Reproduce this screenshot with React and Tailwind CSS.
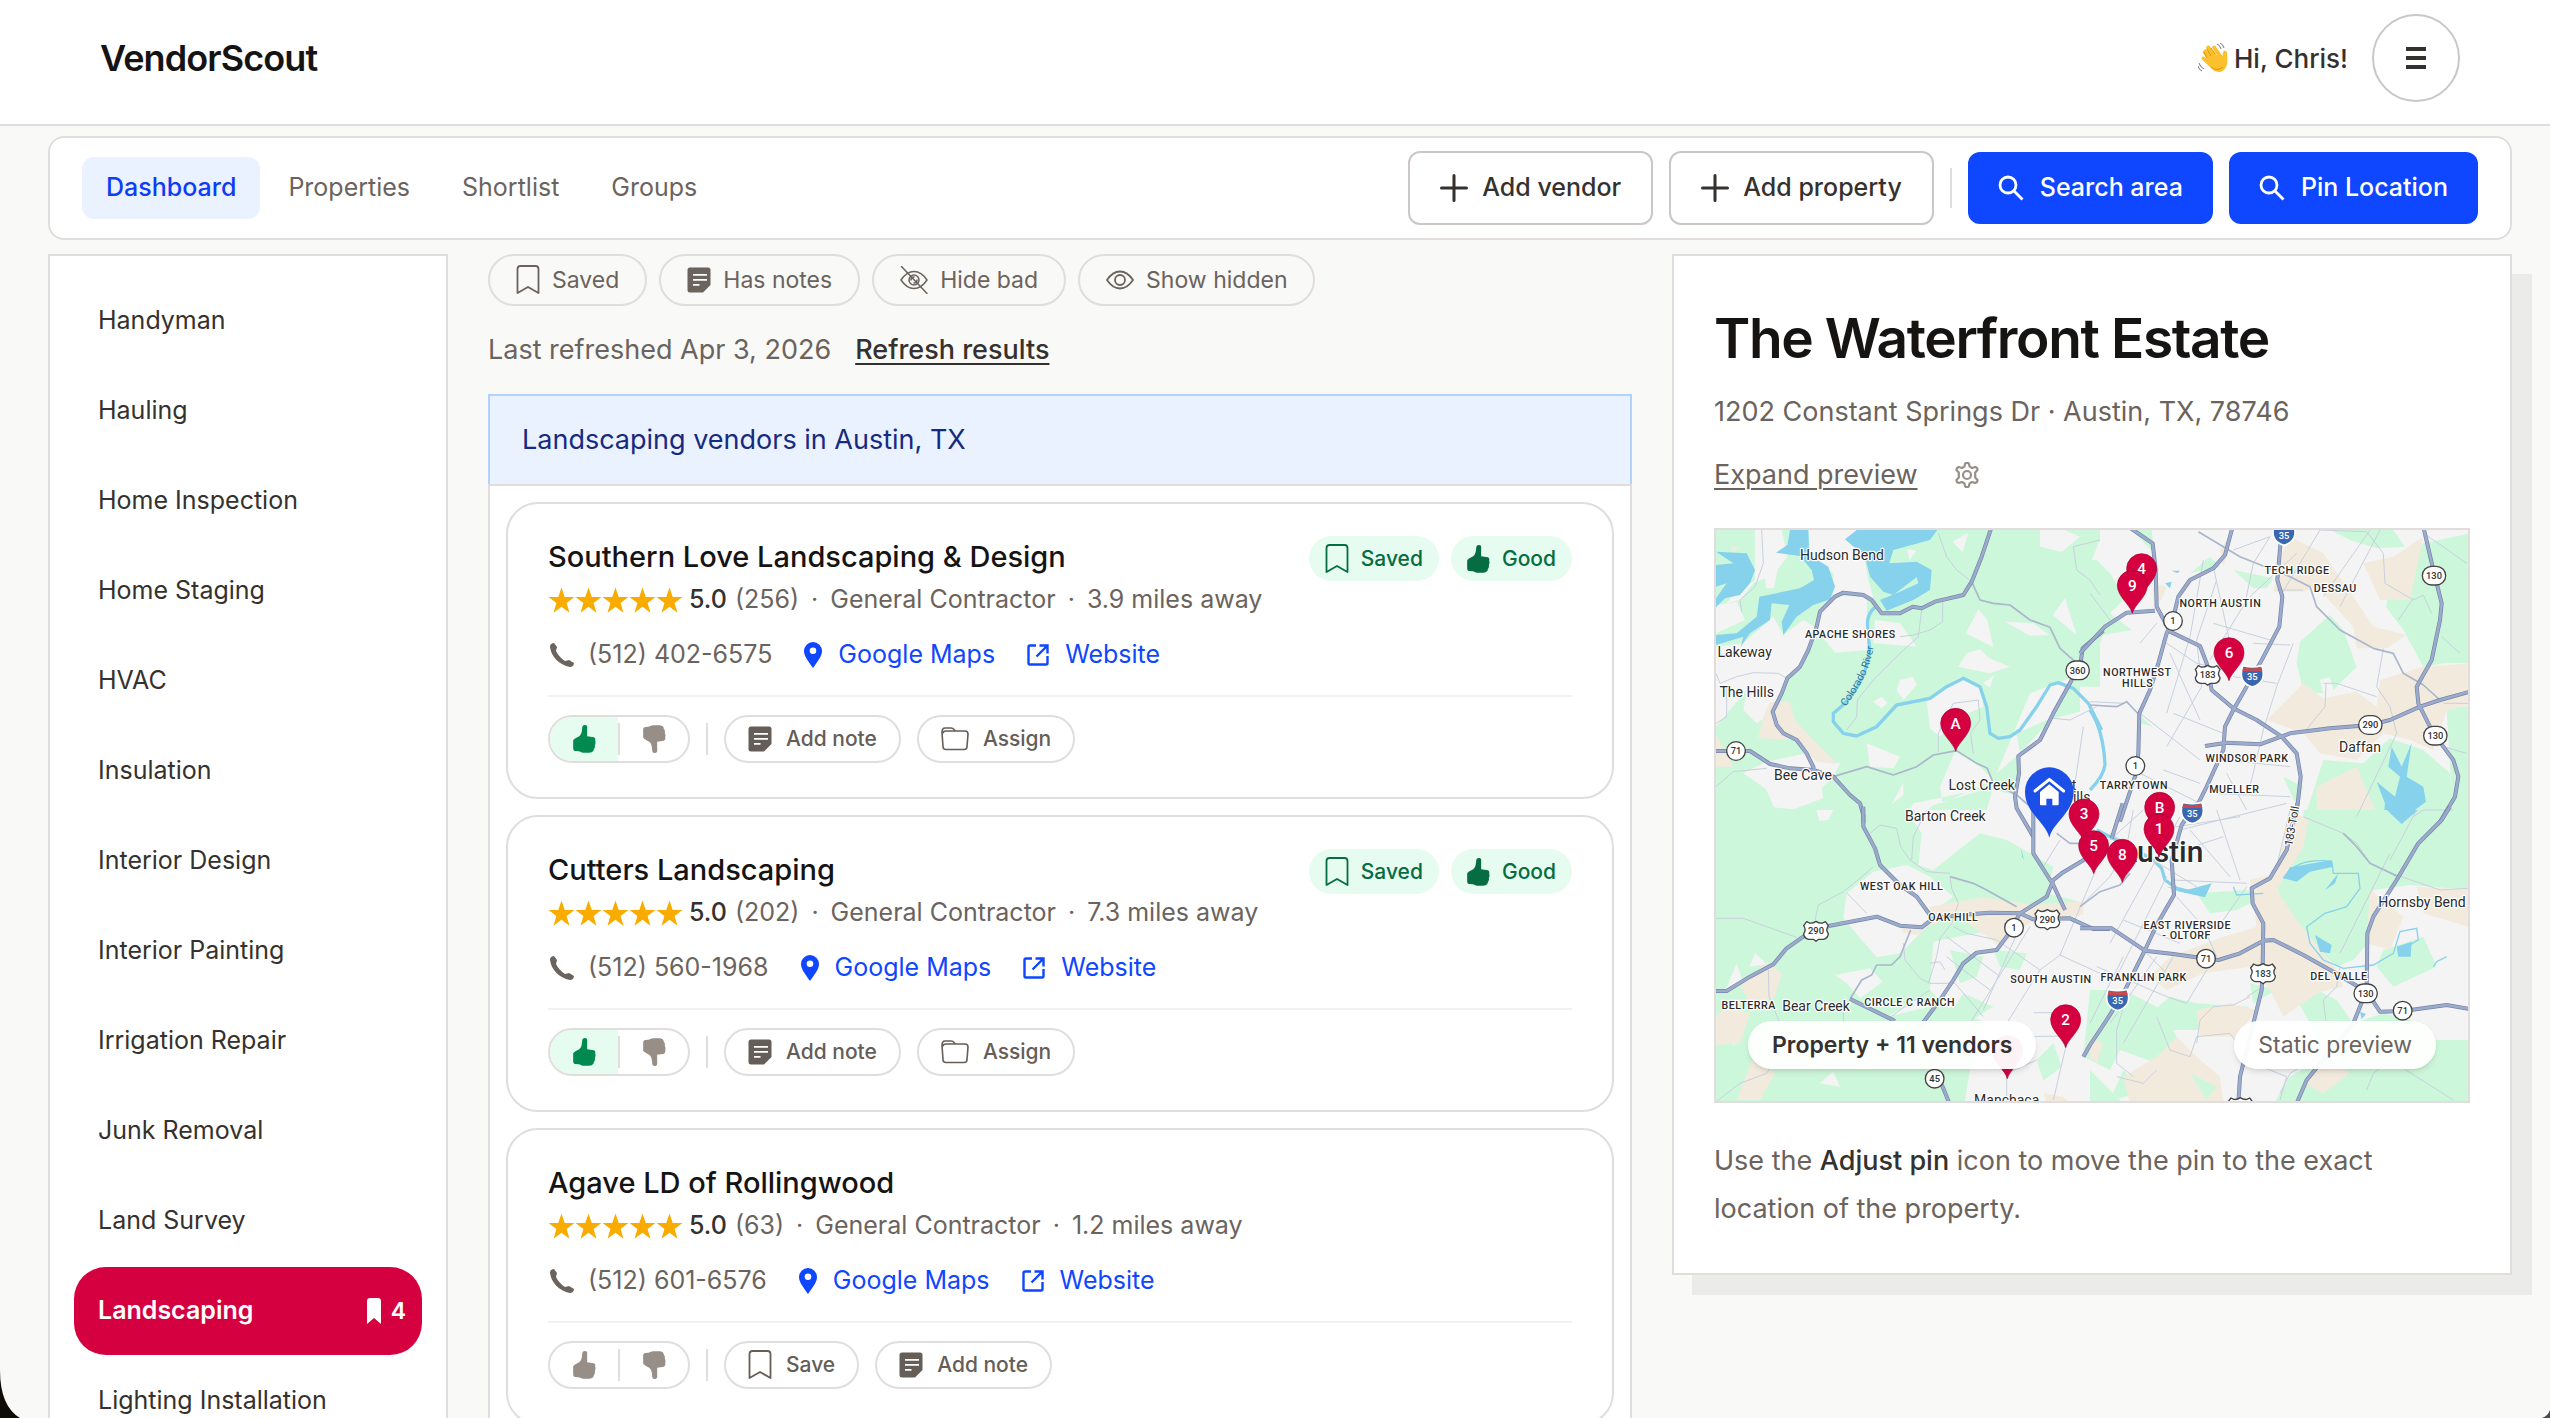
import React, { useState } from 'react';

const StarIcon = () => (
    <svg viewBox="0 0 26 26" className="w-[27px] h-[27px]" fill="#f9ab00">
        <path d="M13 0.5l3.1 9.1h9.4l-7.6 5.7 2.8 9.4-7.7-5.7-7.7 5.7 2.8-9.4L0.5 9.6h9.4z" />
    </svg>
);

const BookmarkIcon = () => (
    <svg viewBox="0 0 24 30" className="w-6 h-[30px]" fill="none" stroke="currentColor" strokeWidth="1.8" strokeLinejoin="round">
        <path d="M1.5 28V4q0-3 3-3h15q3 0 3 3v24l-10.5-6z" />
    </svg>
);

const NoteIcon = () => (
    <svg viewBox="0 0 24 26" className="w-6 h-[26px]">
        <path d="M3 .5h18q2.500 0 2.500 2.500v15l-7.500 7.500H3Q.5 25.500 .5 23V3Q.5 .5 3 .5z" fill="currentColor" />
        <path d="M6 7.800h14M6 12.800h14M6 17.800h6.500" stroke="white" strokeWidth="1.8" />
    </svg>
);

const EyeIcon = ({ off }) => (
    <svg viewBox="0 0 28 28" className="w-7 h-7" fill="none" stroke="currentColor" strokeWidth={off ? 1.5 : 1.8} strokeLinecap="round">
        <path d="M1 14C5 8 9 5.500 14 5.500S23 8 27 14c-4 6-8 8.500-13 8.500S5 20 1 14z" />
        <circle cx="14" cy="14" r="5" />
        {off && <path d="M1.500 .5l25.500 27" />}
        {off && <path d="M11 14a3 3 0 0 1 3-3M17 14a3 3 0 0 1-3 3" />}
    </svg>
);

const FolderIcon = () => (
    <svg viewBox="0 0 28 24" className="w-7 h-6" fill="none" stroke="currentColor" strokeWidth="1.6" strokeLinejoin="round">
        <path d="M1 5.500Q1 1 4 1h6q2 0 3 1.500l1.500 1.500H24q3 0 3 3l-1 12.500q0 3-3 3H5q-3 0-3-3z" />
        <path d="M1.500 6.500Q2 4 5 4h9" />
    </svg>
);

const ThumbIcon = ({ down }) => (
    <svg viewBox="0 0 68 84" className="w-[23px] h-7" fill="currentColor">
        <path
            transform={down ? 'matrix(1 0 0 -1 0 84)' : undefined}
            d="M35 0C42 0 43 5 42 12L42 34 57 36C65 36 68 41 66 47 68 51 67 56 65 60 66 66 65 70 62 72 62 80 55 83 48 83L30 83C24 83 22 80 16 79L6 78C1 77 0 74 0 68L0 48C0 42 12 38 18 34 24 30 26 22 27 10 27 4 29 0 35 0Z"
        />
    </svg>
);

const PhoneIcon = () => (
    <svg viewBox="0 0 24 24" className="w-6 h-6" fill="currentColor">
        <path d="M0 4C0 1 2 0 4 0L7 4 6 8C8 12 11 15.500 15 18L19 17 24 20C24 22.500 22 24 20 24 9 22 1 13 0 4z" />
    </svg>
);

const PinIcon = () => (
    <svg viewBox="0 0 18 26" className="w-[18px] h-[26px]" fill="currentColor">
        <path fillRule="evenodd" d="M9 26C4 19 0 14 0 9a9 9 0 0 1 18 0c0 5-4 10-9 17zM9 5.500a3.300 3.300 0 1 0 0 6.600 3.300 3.300 0 0 0 0-6.600z" />
    </svg>
);

const ExternalIcon = () => (
    <svg viewBox="0 0 22 22" className="w-[22px] h-[22px]" fill="none" stroke="currentColor" strokeWidth="2.4">
        <path d="M9 1.500H3Q1.500 1.500 1.500 3v16q0 1.500 1.500 1.500h16q1.500 0 1.500-1.500v-7M12.500 1.500h8v8M20.500 1.500L9.500 12.500" />
    </svg>
);

const GearIcon = () => (
    <svg viewBox="0 0 26 26" className="w-[26px] h-[26px]" fill="none" stroke="currentColor" strokeWidth="2.2" strokeLinejoin="round">
        <path d="M11.200 1.500Q13 0 14.800 1.500l.8 3.100 2.400 1.400 3.200-1Q23.500 5.500 23.500 8l-2.300 2.500v5l2.300 2.500q0 2.500-2.300 3l-3.200-1-2.400 1.400-.8 3.100Q13 26 11.200 24.500l-.8-3.100L8 20l-3.200 1Q2.500 20.500 2.500 18l2.300-2.500v-5L2.500 8Q2.500 5.500 4.800 5l3.200 1 2.400-1.400z" />
        <circle cx="13" cy="13" r="4" />
    </svg>
);

const PlusIcon = () => (
    <svg viewBox="0 0 28 28" className="w-7 h-7" stroke="currentColor" strokeWidth="3" strokeLinecap="round">
        <path d="M14 1.500v25M1.500 14h25" />
    </svg>
);

const SearchIcon = () => (
    <svg viewBox="0 0 26 26" className="w-[26px] h-[26px]" fill="none" stroke="currentColor" strokeWidth="2.8">
        <circle cx="10" cy="10" r="8" />
        <path d="M15.500 15.500l9 9" />
    </svg>
);

const WaveIcon = () => (
    <svg viewBox="0 0 30 30" className="w-[30px] h-[30px]">
        <path d="M6 7q2-2 4 1l5 7-7-10q0-3 3-2.500l9 11-6-9q1-3 3.500-1.500l7 10 .5-4q2-3 4 0l.5 8q0 9-6 11.500-5 2-10-3L3.500 16q-.5-3 2.500-2.500l3 2.500-4-6q-.5-2 1-3z" fill="#fbc02d" />
        <path d="M9 15l-3-6M13 13L9 6M17 11l-4-6M13 24q6 5 12 0" stroke="#e59600" strokeWidth="1" fill="none" />
        <path d="M19 1q3 1 4 5M22 0q3 1 4 5M1 20q1 4 5 6M0 23q1 4 4 5" stroke="#777" strokeWidth="1" fill="none" />
    </svg>
);

// Every tile keeps its own coordinates and is shifted by dx/dy on the map
const tiles = [
    {
        id: 'nw', dx: -48, dy: -30,
        park: 'M48 30H1200V905H48Z',
        open: 'M325 30H480L450 60 490 100 505 180 525 250 500 228 430 218 400 230 400 160 330 110Z M165 30H245L262 110 232 150 222 205H198L195 175 160 190 120 240 80 250 100 225 165 180Z M48 380L130 370 220 290 250 345 310 300 345 320 325 390 300 440 262 475 215 580 170 610 130 570 140 510 48 620Z M48 255L110 245 135 300 48 340Z M350 330L360 275 410 228 500 230 505 390 405 398Z M525 300L600 310 650 380 520 370Z M805 38L757 65 788 97Z M622 88L650 92 628 120Z M1020 30H1095L1140 50 1085 95 1020 80Z M1200 60L1175 120 1200 225Z M835 268L798 340 880 382 862 300Z M915 305L1000 310 1048 345 990 347Z M1095 235L1058 285 1130 345Z M775 440L800 400 840 388 868 415 930 440 868 460Z M882 465L850 490 870 503Z M600 480L640 470 650 495 610 540 590 510Z M545 530L520 545 545 565 562 548Z M680 545L780 470 840 500 850 560 760 600 720 650 690 625Z M765 695L720 800 728 850 880 780 840 740Z M500 670L600 710 580 745 510 740Z M990 520L890 760 960 700 950 640 1040 600 1200 560V905H850L880 800 700 855 640 905H610L640 850 860 805 945 825 960 700 1060 590 1120 470Z M610 788L575 853 610 825Z M130 760L200 725 320 700 420 730 400 770 365 805 370 835 280 868 222 862 198 808Z',
        sand: 'M210 545H270L285 600 330 650 412 732 350 725 285 660 175 655 190 590Z M48 645L100 740H48Z M90 80H120L100 95Z',
        water: 'M48 95L140 100 165 150 150 190 120 225 75 235 48 262V235L80 190 48 200V135L100 130Z M48 345L110 340 170 290 178 230 300 205 342 180 335 150 300 108 228 98 262 75 270 30H325L328 105 385 140 405 200 390 238 340 255 290 290 250 345 245 305 268 255 215 250 210 300 150 340 122 380 130 350 48 375Z M470 30H712L690 60 580 90 568 130 650 125 695 150 690 210 640 240 560 272 540 240 600 215 655 190 650 172 580 225 550 215 510 170 495 110 435 58Z',
        river: 'M525 262C490 290 505 330 508 380C510 430 480 520 400 580L400 605 430 640 470 648 530 620 590 555 690 535 740 500 790 475 840 500 860 560 870 640 895 655 930 650 960 630 1010 560 1050 495 1075 488 1120 505 1165 550 1205 630',
        minor: 'M185 30L190 130 165 200 120 240 125 275 M715 40L740 110 770 150 815 185 M665 270L655 350 600 400 520 480 472 540 470 590 440 630 M600 350L640 345 690 330 728 305V245 M48 460L60 490 110 470 160 458 235 460 260 475 M48 610L80 590V500 M48 800L100 755 200 745 M715 695V640L760 550 835 540 840 600 812 640 820 700 M1060 595L1110 600 1190 560 M1200 60L1120 80 1130 150 1170 180 1200 225 M1150 620L1125 790',
        medium: 'M815 185L840 240 880 250 930 255 990 300 1050 322 1080 385 1125 425 M400 770L500 740 580 765 650 740 700 705 770 692 830 730 862 745 880 790 950 825 985 855',
        major: 'M875 20L845 110 815 185 790 225 705 245 665 265 638 260 600 280H545L515 240 490 225 430 218 405 230 360 275 350 320 325 390 300 440 262 475 245 520 218 575 230 615 250 640 290 660 320 700 342 745 M40 693H150L210 732 270 745 340 750 400 770 450 825 480 850 490 885V910 M1210 332L1148 385 1143 420 1110 490 1060 580 1020 660 955 708 957 760 945 830 950 865 1000 950',
    },
    {
        id: 'ne', dx: 1122, dy: -30,
        open: 'M-30 500H1140V905H-30Z M30 30H1140V505H30Z',
        park: 'M-30 120H20L60 160 105 235 60 280 125 330 40 345 0 450-30 420Z M125 30H185L192 100Z M430 150L550 175 530 205 490 205Z M720 30H910L945 80 860 85 780 60Z M1000 70L1140 40V430L1060 430 1000 440 940 330 888 260 900 190 960 120Z M630 365L720 285 760 330 800 440 730 510 720 470 690 480 700 520 640 515 620 430Z M1070 565L1140 558V905H1090Z M640 905L700 720 820 730 900 655 1000 690 1080 760 1090 905Z M360 110L300 160 390 140Z M155 590L190 622 155 610Z M580 770L640 800 620 860Z',
        sand: 'M600 50L700 100 790 230 850 320 950 345 890 385 800 385 790 320 680 200 640 215H550L580 90Z M530 600L600 530 640 490 700 535 800 515 860 560 870 480 1000 440 1140 430V555L1070 570 1030 690 960 660 880 640 800 720 690 700 640 640Z M910 110L1000 50 960 240 870 240 820 130Z M190 190L230 200 215 240H190Z M680 800L800 740 870 905H680Z M390 90L430 30 400 140Z',
        water: 'M965 668L935 740 905 680 895 740 930 770 915 830 860 785 885 850 880 895 980 895 975 870 1008 845 1000 800 950 770Z M225 190L245 185 240 205Z M245 152H270L262 160Z',
        river: 'M0 570Q40 630 45 735 40 770 0 810',
        minor: 'M340 120L300 350 230 580 M380 180L320 360 335 500 230 680 M430 90L540 50 490 130 465 250 360 420 M610 370L560 500 520 630 480 800 M840 30L700 230 M870 30L750 260 M690 30L830 35 880 100 885 190 970 240 1000 225 1025 280 M1055 350L1110 400 M970 235L925 300 M700 490H740L860 530 M708 490L705 560 640 640 M0 545L100 550 M180 500L150 480 M215 360L320 430 410 450 M240 400L330 600 M250 580L400 640 M150 580L330 720 M130 750L330 850 M220 750L330 790 M370 140L420 370 M480 230L620 100 M370 310L540 360 M490 370L600 375 M430 470L560 490 M400 720L600 740 M410 760L470 870 M360 820L600 830 M880 385L860 500 900 560 920 640 800 890 M690 30L570 230 M0 220L60 300 M150 370L200 310 M1130 130L1060 80 1000 40 M1060 550H1134 M1060 680L1130 700 M970 890L1000 870H1090 M640 210L560 210',
        medium: 'M325 35L450 110 600 170 660 200 680 260 750 330 850 385 910 400 940 460 1000 495 1050 540 M0 555L80 560 110 545 148 585',
        major: 'M115 20L188 70 197 150 200 260 240 335 330 378 350 430 365 510 430 565 500 600 575 650 620 700 632 770 620 880 M428 20L405 105 370 145 300 180 265 230 248 300 230 340 205 430 180 510 148 580 145 700 135 770 90 905 M575 30L562 180 577 230 568 320 510 430 430 570 405 620 400 690 350 800 310 880 280 905 M345 678L410 668 510 673 600 640 720 625 840 615 900 600 990 560 1050 540 1140 515 M1000 20L1030 150 1055 250 1050 300 1025 420 980 500 985 550 1030 640 1090 720 1105 770 1095 830 1050 905 M-30 400L45 320 110 278 195 272',
    },
    {
        id: 'sw', dx: -48, dy: 840,
        park: 'M48 0H1200V900H48Z',
        open: 'M620 0H1200V290L1040 250 1060 170 920 90 840 70 700 180 655 165 665 70Z M350 0H400L385 30 358 32Z M440 250L520 185 620 165 690 200 760 260 690 310 680 350 600 430 530 442 430 325Z M700 395L850 365 980 320 1200 285V900H790L810 780 860 640 730 580 690 540Z M405 495L510 475 548 515 480 565 440 520Z M400 785L358 820 420 830Z M110 460L75 545 130 520Z M165 430L148 470 200 462Z M690 590L560 620 650 570Z M95 665H120L100 710Z',
        sand: 'M120 530L200 455 245 490 225 560 160 590Z M48 620L80 590 150 610 120 700 48 705Z M110 870L160 740 225 790 180 870Z M690 290L850 262 1000 285 1200 270V310L1000 330 900 410 870 385 760 310 690 350Z M600 350L670 355 660 375 610 370Z M1030 850L1090 860 1110 880H1040Z M1150 720L1200 660V760Z',
        greens: 'M750 420L850 440 830 500 780 520Z M880 420L980 430 960 480 900 470Z M1010 750L1060 700 1085 770 1030 812Z M790 550L880 590 800 640 740 630Z M660 400L690 460 640 430Z M750 240L800 235 790 262Z',
        water: 'M963 115L972 150 966 140Z',
        river: '',
        minor: 'M48 325L130 325 200 350 290 382 M345 330L355 285 430 245 480 205 520 170 M510 70L540 45 590 55 602 110 630 150 680 185 750 190 M635 150L640 80 680 0 M750 200L755 235 775 280 755 340 720 385 710 440 685 520 M610 400L615 450 660 505 690 520 765 520 850 620 M205 480L207 560 240 640 M48 875L120 820 200 790 230 740 M430 590V640 M1200 150L1080 435 1020 480 870 720 M1080 435L1200 490 M960 350L850 600 M990 350L810 640 M760 350L800 370 890 390 1020 480 M740 380L900 500 M690 460L720 455 735 480 M740 440L790 480 870 540 M560 630L600 600 690 540 M1000 608H1080 M980 680L1100 678 M920 790V875 M1100 700L1060 870 M920 790L1010 750 M440 248L500 310 M1030 170L1080 90',
        medium: 'M632 360L600 440 575 465H530L515 495 485 510 450 567 M750 200L820 220 860 240 950 290 M1070 70L1110 100 1140 100',
        major: 'M490-10V50L525 115 540 165 600 225 650 260 690 315 M40 543H80L150 500 220 463 260 415 310 380 390 347 530 320 600 347 665 352 700 325 780 315 870 308 960 310 1040 260 1060 210 1085 190 1210 115 M965 312L1000 328 1110 325 1180 357H1230 M960 310L920 380 890 420 830 428 790 460 760 510 720 570 660 650 M450 567L585 633 M700 790L728 830 750 885 M1000-10V130L1060 225 1095 300',
    },
    {
        id: 'se', dx: 1122, dy: 840,
        open: 'M-20 0H1140V900H-20Z',
        park: 'M640 0H1140V240L960 225 850 240 850 380 790 450 740 470 640 380 580 290 560 230 590 180 640 110Z M880 420L1000 380 1040 470 910 530 860 470Z M620 570L690 545 740 570 790 640 880 610 1000 640 1020 690 1140 690V900H540L600 800 700 740 660 640Z M120 660L240 560 320 580 480 590 320 660Z M0 540L100 540 220 600 290 740 200 760 90 720 60 780-20 740Z M320 250L470 240 520 260 440 300 360 310Z M0 780L100 880H0Z M480 520L560 540 490 580Z M60 870L100 780 160 850Z',
        sand: 'M480 210L560 190 600 0 655 30 640 110 560 240 620 330 740 480 760 530 690 545 580 620 540 540 480 470 340 490 230 540 180 500 240 440 400 380 500 350Z M840 240L940 320 900 420 830 400Z M980 230L1134 240V350L1000 310Z M320 600L420 580 500 600 440 680 330 680Z M100 800L200 740 260 680 320 740 390 800 400 880H120Z M0 680L40 700 20 760 0 740Z M700 740L780 790 700 850 640 820Z',
        greens: 'M300 790L380 830 350 870Z',
        water: 'M580 205L600 172 725 150 730 170 660 185 620 215Z M230 230L290 240 365 220 345 262 270 245Z M675 375L725 405 720 430 690 425Z M920 410L965 395 962 440 925 440Z M890 0H985L960 20 935 42Z M705 240L745 190 735 220Z M810 605L828 612 815 628Z',
        river: 'M20 60Q120 110 190 150 L215 175 225 210 260 235 320 250',
        minor: 'M130 0L110 110 60 200-20 280 M160 0L60 90 M270 20L60 400 M60 70L320 230 M230 200L80 500 M100 330L270 400 M260 260L340 350 380 440 M200 60L450 20 M270 60L590-20 M280 120L400 80 M380 0L450 210 M300 60L420 200 M250 210L470 220 M400 330L470 230 M100 440L0 640 M200 440L60 640 M250 440L100 700 M20 470L230 560 290 580 350 480 M170 430L260 520 M110 560L80 660 80 760 130 800 M560 170L600 0 M640 20L760 70 800 100 840 160 920 195 1050 240 1134 235 M750 430L900 130 M980 0L900 150 M750 470L740 530 700 570 710 650 M470 560L520 530 M320 700L330 630 370 590 430 585 480 560 M320 680L420 670 450 710 M200 620L240 720 300 740 320 680 M80 800L160 820 200 780 M570 850L600 790 700 730 M830 840L850 790 900 750 1090 870 M490 760L590 800 570 870 M680 640L650 700',
        medium: 'M760 70L800 110 840 160 920 198 M120 190L90 225 30 245-30 290',
        major: 'M320-20L275 45 245 150 252 255 200 345 165 420 100 550 50 630 0 705-20 740 M-30 355H65L165 422 250 432 340 445 385 450 450 430 520 392 550 390 640 435 730 485 830 545 870 605 940 603 1070 585 1140 597 M622-20L590 120 540 205 485 235 488 280 520 340 518 470 515 540 490 640 450 800 445 880 M98-20L65 85 M1080-10L1055 30 985 100 920 210 850 320 832 370 830 540 790 640 650 810 620 880',
    },
];

const mapAreas = [
    { name: 'APACHE SHORES', x: 403, y: 324 },
    { name: 'TECH RIDGE', x: 1743, y: 131 },
    { name: 'DESSAU', x: 1858, y: 186 },
    { name: 'NORTH AUSTIN', x: 1513, y: 231 },
    { name: 'NORTHWEST', x: 1264, y: 438 },
    { name: 'HILLS', x: 1265, y: 470 },
    { name: 'WINDSOR PARK', x: 1593, y: 697 },
    { name: 'TARRYTOWN', x: 1254, y: 777 },
    { name: 'MUELLER', x: 1555, y: 789 },
    { name: 'WEST OAK HILL', x: 557, y: 1080 },
    { name: 'OAK HILL', x: 712, y: 1173 },
    { name: 'SOUTH AUSTIN', x: 1005, y: 1358 },
    { name: 'FRANKLIN PARK', x: 1283, y: 1353 },
    { name: 'EAST RIVERSIDE', x: 1414, y: 1196 },
    { name: '- OLTORF', x: 1412, y: 1228 },
    { name: 'CIRCLE C RANCH', x: 581, y: 1429 },
    { name: 'BELTERRA', x: 98, y: 1438 },
    { name: 'DEL VALLE', x: 1869, y: 1349 },
];

const mapTowns = [
    { name: 'Hudson Bend', x: 378, y: 90 },
    { name: 'Lakeway', x: 86, y: 382 },
    { name: 'The Hills', x: 92, y: 500 },
    { name: 'Bee Cave', x: 261, y: 749 },
    { name: 'Lost Creek', x: 797, y: 779 },
    { name: 'est', x: 1052, y: 779 },
    { name: 'Hills', x: 1082, y: 817 },
    { name: 'Barton Creek', x: 688, y: 873 },
    { name: 'Bear Creek', x: 300, y: 1444 },
    { name: 'Daffan', x: 1932, y: 666 },
    { name: 'Hornsby Bend', x: 2118, y: 1132 },
    { name: 'Manchaca', x: 872, y: 1725 },
];

const mapShields = [
    { no: '71', x: 60, y: 663, type: 'state' },
    { no: '1', x: 1371, y: 273, type: 'state' },
    { no: '1', x: 1258, y: 708, type: 'state' },
    { no: '1', x: 894, y: 1193, type: 'state' },
    { no: '45', x: 656, y: 1646, type: 'state' },
    { no: '71', x: 1470, y: 1286, type: 'state' },
    { no: '71', x: 2060, y: 1442, type: 'state' },
    { no: '360', x: 1085, y: 421, type: 'loop' },
    { no: '130', x: 2154, y: 137, type: 'loop' },
    { no: '130', x: 2158, y: 617, type: 'loop' },
    { no: '290', x: 1963, y: 585, type: 'loop' },
    { no: '130', x: 1949, y: 1390, type: 'loop' },
    { no: '183', x: 1475, y: 435, type: 'us' },
    { no: '290', x: 300, y: 1203, type: 'us' },
    { no: '290', x: 994, y: 1168, type: 'us' },
    { no: '183', x: 1641, y: 1330, type: 'us' },
    { no: '', x: 1573, y: 1732, type: 'us' },
    { no: '35', x: 1704, y: 12, type: 'interstate' },
    { no: '35', x: 1609, y: 437, type: 'interstate' },
    { no: '35', x: 1429, y: 847, type: 'interstate' },
    { no: '35', x: 1205, y: 1408, type: 'interstate' },
];

const vendorPins = [
    { label: '4', x: 1277, y: 200 },
    { label: '9', x: 1249, y: 250 },
    { label: '6', x: 1539, y: 452 },
    { label: 'A', x: 719, y: 664 },
    { label: '3', x: 1104, y: 936 },
    { label: 'B', x: 1331, y: 916 },
    { label: '5', x: 1133, y: 1031 },
    { label: '8', x: 1219, y: 1057 },
    { label: '1', x: 1329, y: 981 },
    { label: '2', x: 1049, y: 1553 },
    { label: '', x: 874, y: 1646 },
];

const Shield = ({ no, x, y, type }) => (
    <g transform={`translate(${x} ${y})`}>
        {type === 'state' && <circle r="28" fill="#fff" stroke="#444" strokeWidth="4" />}
        {type === 'loop' && <rect x="-35" y="-28" width="70" height="56" rx="28" fill="#fff" stroke="#444" strokeWidth="4" />}
        {type === 'us' && (
            <path d="M-28-28L-20-24Q-10-22 0-29 10-22 20-24L28-28 37-16Q28-4 37 8 36 22 22 25L8 25 0 31-8 25-22 25Q-36 22-37 8-28-4-37-16Z" fill="#fff" stroke="#444" strokeWidth="4" strokeLinejoin="round" />
        )}
        {type === 'interstate' && (
            <>
                <path d="M-28-30Q0-22 28-30 46 20 0 34-46 20-28-30Z" fill="#3a68b0" stroke="#fff" strokeWidth="5" />
                <path d="M-27-25Q0-18 27-25L30-13H-30Z" fill="#c9494d" />
            </>
        )}
        <text y={type === 'interstate' ? 14 : 10} textAnchor="middle" fontSize="28" fontWeight="500" fill={type === 'interstate' ? '#fff' : '#333'}>{no}</text>
    </g>
);

const AreaMap = () => (
    <svg viewBox="0 0 2256 1713" className="block w-full h-auto font-['Roboto',sans-serif]" role="img" aria-label="Map of the property and nearby vendors">
        <rect width="2256" height="1713" fill="#f4f4f4" />
        {tiles.map(t => (
            <g key={t.id} transform={`translate(${t.dx} ${t.dy})`}>
                {(t.id === 'ne' || t.id === 'se') ? (
                    <><path d={t.open} fill="#f4f4f4" /><path d={t.park} fill="#cdf7da" /></>
                ) : (
                    <><path d={t.park} fill="#cdf7da" /><path d={t.open} fill="#f4f4f4" /></>
                )}
                <path d={t.sand} fill="#f2ebdd" />
                {t.greens && <path d={t.greens} fill="#cdf7da" />}
                <path d={t.water} fill="#86d2ec" />
            </g>
        ))}
        {tiles.map(t => (
            <g key={t.id} transform={`translate(${t.dx} ${t.dy})`} fill="none" strokeLinejoin="round">
                <path d={t.river} stroke="#86d2ec" strokeWidth="10" />
                <path d={t.minor} stroke="#c8d0de" strokeWidth="3" />
                <path d={t.medium} stroke="#a9b6cc" strokeWidth="5" />
            </g>
        ))}
        <g transform="translate(1122 840)" fill="none" stroke="#86d2ec" strokeWidth="4">
            <path d="M580 205Q610 150 700 152L725 155 730 190 805 190 810 235 770 290 705 310 650 350 660 400 700 450 760 475 850 465 910 430 930 365 980 355 985 390 950 410M1030 470L1040 455 1070 440M430 230L440 255 520 250" />
        </g>
        {tiles.map(t => (
            <g key={t.id} transform={`translate(${t.dx} ${t.dy})`} fill="none" strokeLinejoin="round">
                <path d={t.major} stroke="#7383ab" strokeWidth="12" />
                <path d={t.major} stroke="#9dabcb" strokeWidth="8" />
            </g>
        ))}
        <g fill="#2b2b2b" stroke="#fff" strokeWidth="7" strokeLinejoin="round" textAnchor="middle" className="[paint-order:stroke]">
            <g fontSize="32" fontWeight="500" className="tracking-wider">
                {mapAreas.map(a => <text key={a.name} x={a.x} y={a.y}>{a.name}</text>)}
            </g>
            <g fontSize="42">
                {mapTowns.map(t => <text key={t.name} x={t.x} y={t.y}>{t.name}</text>)}
            </g>
            <text x="1333" y="996" fontSize="90" fontWeight="500">Austin</text>
            <text transform="translate(1739 890) rotate(-80)" fontSize="34">183-Toll</text>
        </g>
        <g fontSize="31" fill="#2a7399" textAnchor="middle">
            <path id="river-name" d="M376 546Q470 430 474 330" fill="none" />
            <text><textPath href="#river-name" startOffset="50%">Colorado River</textPath></text>
        </g>
        {mapShields.map(s => <Shield key={`${s.no}-${s.x}`} {...s} />)}
        <g transform="translate(1000 923)">
            <path d="M0 0C-12-48-73-75-73-138a73 73 0 0 1 146 0C73-75 12-48 0 0Z" fill="#1b4fe8" />
            <path d="M-43-140L0-175 43-140" fill="none" stroke="#fff" strokeWidth="9" strokeLinecap="round" strokeLinejoin="round" />
            <path fillRule="evenodd" d="M0-160L-28-137V-100Q-28-97-25-97H-9V-117H9V-97H25Q28-97 28-100V-137Z" fill="#fff" />
        </g>
        {vendorPins.map(p => (
            <g key={p.x} transform={`translate(${p.x} ${p.y})`}>
                <path d="M0 0C-6-26-45-50-45-84a45 45 0 0 1 90 0C45-50 6-26 0 0Z" fill="#d50040" stroke="#a80033" strokeWidth="2" />
                <text y="-68" textAnchor="middle" fontSize="46" fontWeight="500" fill="#fff">{p.label}</text>
            </g>
        ))}
    </svg>
);

const navItems = ['Dashboard', 'Properties', 'Shortlist', 'Groups'];

const categories = [
    'Handyman', 'Hauling', 'Home Inspection', 'Home Staging', 'HVAC', 'Insulation', 'Interior Design',
    'Interior Painting', 'Irrigation Repair', 'Junk Removal', 'Land Survey', 'Landscaping', 'Lighting Installation',
];

const filters = [
    { label: 'Saved', icon: <BookmarkIcon /> },
    { label: 'Has notes', icon: <NoteIcon /> },
    { label: 'Hide bad', icon: <EyeIcon off /> },
    { label: 'Show hidden', icon: <EyeIcon /> },
];

const vendors = [
    { name: 'Southern Love Landscaping & Design', reviews: 256, distance: '3.9', phone: '(512) 402-6575', saved: true },
    { name: 'Cutters Landscaping', reviews: 202, distance: '7.3', phone: '(512) 560-1968', saved: true },
    { name: 'Agave LD of Rollingwood', reviews: 63, distance: '1.2', phone: '(512) 601-6576', saved: false },
];

const Badge = ({ icon, children }) => (
    <span className="flex items-center gap-3 h-[45px] px-4 rounded-full bg-[#e6fcf0] text-[#066c42] text-[21px] font-medium">
        {icon}{children}
    </span>
);

const ActionButton = ({ icon, children }) => (
    <button className="flex items-center gap-3.5 h-12 px-[22px] rounded-full border-2 border-[#e1dddd] text-[#655d57] text-[21px] font-medium">
        {icon}{children}
    </button>
);

const VendorCard = ({ vendor }) => (
    <article className="border-2 border-[#e1dddd] rounded-[32px] px-10 pt-8 pb-[34px]">
        <div className="flex items-start justify-between">
            <div>
                <h3 className="text-[29px] leading-[42px] font-medium text-[#161413]">{vendor.name}</h3>
                <div className="flex items-center h-11 text-[25px] text-[#6b635d]">
                    <span className="flex mr-1.5">{[1, 2, 3, 4, 5].map(n => <StarIcon key={n} />)}</span>
                    <span className="font-medium text-[#35312e] mr-2">5.0</span>
                    <span>({vendor.reviews})</span>
                    <span className="mx-3">·</span>
                    <span>General Contractor</span>
                    <span className="mx-3">·</span>
                    <span>{vendor.distance} miles away</span>
                </div>
            </div>
            {vendor.saved && (
                <div className="flex gap-3">
                    <Badge icon={<BookmarkIcon />}>Saved</Badge>
                    <Badge icon={<ThumbIcon />}>Good</Badge>
                </div>
            )}
        </div>
        <div className="flex items-center gap-8 h-11 mt-[11px] text-[25px] text-[#6b635d]">
            <span className="flex items-center gap-3.5 pl-0.5"><PhoneIcon />{vendor.phone}</span>
            <a href="#maps" className="flex items-center gap-4 text-[#0f46ff]"><PinIcon />Google Maps</a>
            <a href="#website" className="flex items-center gap-4 text-[#0f46ff]"><ExternalIcon />Website</a>
        </div>
        <div className="flex items-center mt-[18px] pt-[18px] border-t-2 border-[#f2f1f1]">
            <div className="flex items-center h-12 rounded-full border-2 border-[#e1dddd] overflow-hidden text-[#978e88]">
                <button aria-label="Good" className={`flex items-center justify-center h-full w-[68px] ${vendor.saved ? 'bg-[#e6fcf0] text-[#008a50]' : ''}`}><ThumbIcon /></button>
                <span className="w-0.5 h-8 bg-[#e1dddd]" />
                <button aria-label="Bad" className="flex items-center justify-center h-full w-[68px]"><ThumbIcon down /></button>
            </div>
            <span className="w-0.5 h-8 mx-4 bg-[#e1dddd]" />
            <div className="flex items-center gap-4">
                {!vendor.saved && <ActionButton icon={<BookmarkIcon />}>Save</ActionButton>}
                <ActionButton icon={<NoteIcon />}>Add note</ActionButton>
                {vendor.saved && <ActionButton icon={<FolderIcon />}>Assign</ActionButton>}
            </div>
        </div>
    </article>
);

const App = () => {
    const [activeNav, setActiveNav] = useState('Dashboard');
    const [activeCategory, setActiveCategory] = useState('Landscaping');

    return (
        <div className="relative flex flex-col h-screen overflow-hidden bg-[#f9f9f7] font-['Inter',sans-serif] text-[#35312e]">
            <header className="shrink-0 flex items-center justify-between h-[126px] pb-2 pl-[100px] pr-[90px] bg-white border-b-2 border-[#e1dddd]">
                <h1 className="text-[36px] font-semibold tracking-tight text-[#161413]">VendorScout</h1>
                <div className="flex items-center gap-6">
                    <span className="flex items-center gap-1.5 text-[26px] font-medium"><WaveIcon />Hi, Chris!</span>
                    <button aria-label="Menu" className="flex flex-col items-center justify-center gap-[5px] w-[88px] h-[88px] rounded-full border-2 border-[#cbc7c4]">
                        <span className="w-5 h-1 bg-[#35312e]" />
                        <span className="w-5 h-1 bg-[#35312e]" />
                        <span className="w-5 h-1 bg-[#35312e]" />
                    </button>
                </div>
            </header>

            <div className="shrink-0 pl-12 pr-[38px] pt-2.5">
                <div className="flex items-center justify-between h-[104px] px-8 rounded-2xl bg-white border-2 border-[#e1dddd]">
                    <nav className="flex gap-1 text-[25px]">
                        {navItems.map(item => (
                            <a
                                key={item}
                                href={`#${item.toLowerCase()}`}
                                onClick={() => setActiveNav(item)}
                                className={`flex items-center h-[62px] px-6 rounded-xl ${activeNav === item ? 'bg-[#eaf2ff] text-[#0f3cf5] font-medium' : 'text-[#6b635d]'}`}
                            >
                                {item}
                            </a>
                        ))}
                    </nav>
                    <div className="flex items-center gap-4 text-[25px] font-medium">
                        <button className="flex items-center gap-3.5 h-[74px] px-[30px] rounded-xl border-2 border-[#cbc7c4]"><PlusIcon />Add vendor</button>
                        <button className="flex items-center gap-3.5 h-[74px] px-[30px] rounded-xl border-2 border-[#cbc7c4]"><PlusIcon />Add property</button>
                        <span className="w-0.5 h-10 bg-[#e1dddd]" />
                        <button className="flex items-center gap-4 h-[72px] px-[30px] rounded-xl bg-[#0f46ff] text-white"><SearchIcon />Search area</button>
                        <button className="flex items-center gap-4 h-[72px] px-[30px] rounded-xl bg-[#0f46ff] text-white"><SearchIcon />Pin Location</button>
                    </div>
                </div>
            </div>

            <div className="grow min-h-0 flex items-start gap-10 pl-12 pr-[38px] pt-3.5">
                <aside className="shrink-0 w-[400px] h-full overflow-hidden px-6 pt-[21px] bg-white border-2 border-b-0 border-[#e1dddd]">
                    <ul className="flex flex-col gap-0.5">
                        {categories.map(cat => (
                            <li key={cat}>
                                <button
                                    onClick={() => setActiveCategory(cat)}
                                    className={`flex items-center justify-between w-full h-[88px] pl-6 pr-4 rounded-[32px] text-[25px] ${activeCategory === cat ? 'bg-[#d50040] text-white font-semibold' : ''}`}
                                >
                                    {cat}
                                    {activeCategory === cat && (
                                        <span className="flex items-center gap-2.5 text-[23px]">
                                            <svg viewBox="0 0 14 26" className="w-3.5 h-[26px]" fill="currentColor"><path d="M0 26V3Q0 0 3 0h8q3 0 3 3v23l-7-6z" /></svg>
                                            4
                                        </span>
                                    )}
                                </button>
                            </li>
                        ))}
                    </ul>
                </aside>

                <main className="grow min-w-0 h-full overflow-hidden">
                    <div className="flex gap-3">
                        {filters.map(f => (
                            <button key={f.label} className="flex items-center gap-3 h-[52px] px-[26px] rounded-full border-2 border-[#e1dddd] text-[23px] text-[#6b635d]">
                                {f.icon}{f.label}
                            </button>
                        ))}
                    </div>
                    <div className="flex items-center gap-6 h-[88px] text-[27px] text-[#6b635d]">
                        <span>Last refreshed Apr 3, 2026</span>
                        <a href="#refresh" className="font-medium text-[#35312e] underline decoration-2 underline-offset-4">Refresh results</a>
                    </div>
                    <h2 className="flex items-center h-[90px] px-8 text-[27px] text-[#172a80] bg-[#eaf2ff] border-2 border-b-0 border-[#b0d2fc]">Landscaping vendors in Austin, TX</h2>
                    <div className="flex flex-col gap-4 p-4 bg-white border-2 border-[#e1dddd]">
                        {vendors.map(v => <VendorCard key={v.name} vendor={v} />)}
                    </div>
                </main>

                <section className="shrink-0 w-[840px] px-10 pt-12 pb-10 bg-white border-2 border-[#e1dddd] shadow-[20px_20px_0_0_#ebebea]">
                    <h2 className="text-[55px] leading-[68px] font-semibold tracking-tight text-[#161413]">The Waterfront Estate</h2>
                    <p className="mt-3 text-[27px] leading-[56px] text-[#6b635d]">1202 Constant Springs Dr · Austin, TX, 78746</p>
                    <div className="flex items-center gap-9 h-[70px] text-[27px] text-[#6b635d]">
                        <a href="#expand" className="underline decoration-2 underline-offset-4">Expand preview</a>
                        <button aria-label="Preview settings" className="text-[#978e88]"><GearIcon /></button>
                    </div>
                    <div className="relative mt-[18px] border-2 border-[#e1dddd]">
                        <AreaMap />
                        <div className="absolute inset-x-8 bottom-8 flex items-center justify-between text-[23px]">
                            <span className="flex items-center h-12 px-6 rounded-full bg-white/95 shadow-md font-semibold">Property + 11 vendors</span>
                            <span className="flex items-center h-12 px-6 rounded-full bg-white/95 shadow-md text-[#6b635d]">Static preview</span>
                        </div>
                    </div>
                    <p className="mt-[34px] text-[27px] leading-[48px] text-[#6b635d]">
                        Use the <span className="font-medium text-[#35312e]">Adjust pin</span> icon to move the pin to the exact location of the property.
                    </p>
                </section>
            </div>

            <svg viewBox="0 0 20 48" className="absolute bottom-0 left-0 w-5 h-12" fill="#0d0c08"><path d="M0 0Q0 36 20 48H0z" /></svg>
            <svg viewBox="0 0 8 8" className="absolute bottom-0 right-0 w-2 h-2" fill="#4a4a4a"><path d="M8 0Q6 6 0 8H8z" /></svg>
        </div>
    );
};

export default App;
